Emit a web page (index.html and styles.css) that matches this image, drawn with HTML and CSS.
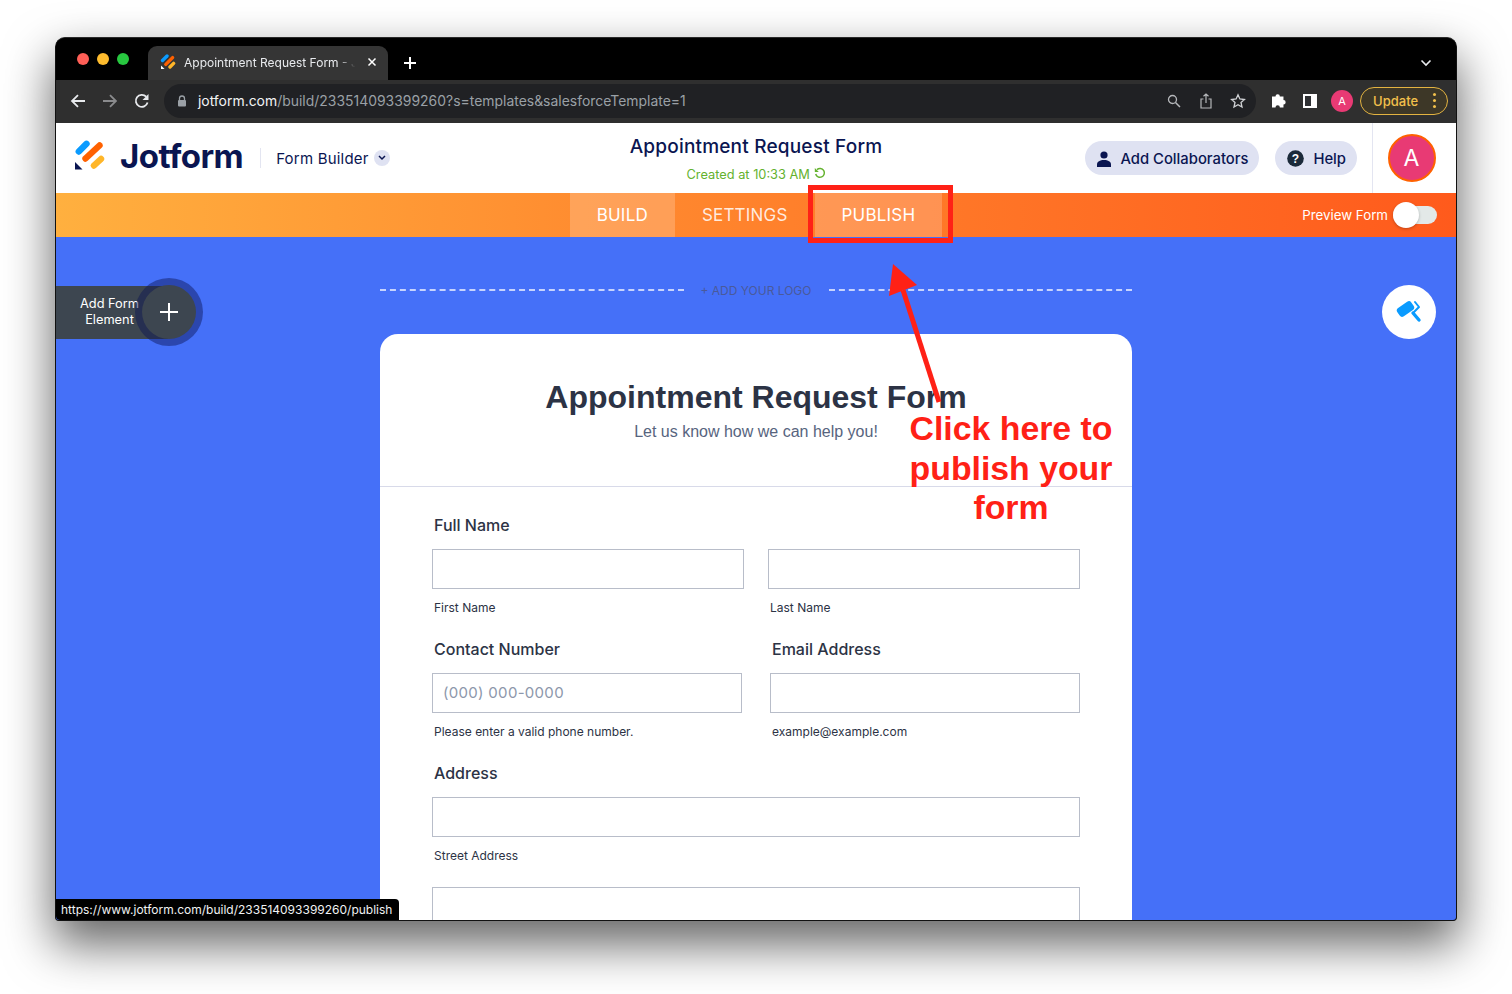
FILE: index.html
```html
<!DOCTYPE html>
<html lang="en">
<head>
  <meta charset="UTF-8">
  <meta name="viewport" content="width=device-width, initial-scale=1.0">
  <title>Appointment Request Form</title>
  <link rel="stylesheet" href="styles.css">
</head>
<body>
  <div class="window">
    <!-- browser tabs -->
    <div class="tabstrip">
      <div class="lights"><i class="red"></i><i class="yellow"></i><i class="green"></i></div>
      <div class="tab">
        <svg class="favicon" width="16" height="16" viewBox="0 0 16 16"><g stroke-linecap="round" stroke-width="3.4"><path d="M2.5 6.500 7 2" stroke="#0a9bff"/><path d="M5.800 10.400 12.600 3.600" stroke="#ff6100"/><path d="M10 13 13.600 9.400" stroke="#ffb629"/></g><path d="M1 11.500V15h3.600z" fill="#fff"/></svg>
        <span class="tab-title">Appointment Request Form - J</span>
        <svg width="10" height="10" viewBox="0 0 10 10"><path d="M1.500 1.500l7 7M8.500 1.500l-7 7" stroke="#fff" stroke-width="1.500"/></svg>
      </div>
      <svg class="newtab" width="14" height="14" viewBox="0 0 14 14"><path d="M7 1v12M1 7h12" stroke="#fff" stroke-width="2"/></svg>
      <svg class="tabmenu" width="12" height="8" viewBox="0 0 12 8"><path d="M1.500 1.500 6 6l4.500-4.500" fill="none" stroke="#e8eaed" stroke-width="1.600"/></svg>
    </div>

    <!-- browser toolbar -->
    <div class="toolbar">
      <svg class="nav-icon" width="16" height="16" viewBox="0 0 16 16"><path d="M15 8H2M8 2 2 8l6 6" fill="none" stroke="#e8eaed" stroke-width="1.800"/></svg>
      <svg class="nav-icon" width="16" height="16" viewBox="0 0 16 16"><path d="M1 8h13M8 2l6 6-6 6" fill="none" stroke="#8a8b8d" stroke-width="1.800"/></svg>
      <svg class="nav-icon" width="16" height="16" viewBox="0 0 16 16"><path d="M13.600 9.500A6 6 0 1 1 12.200 3.700" fill="none" stroke="#e8eaed" stroke-width="1.800"/><path d="M14.500 1v6h-6z" fill="#e8eaed"/></svg>
      <div class="omnibox">
        <svg width="10" height="12" viewBox="0 0 10 12"><path d="M2.500 5V3.500a2.500 2.500 0 0 1 5 0V5" fill="none" stroke="#9aa0a6" stroke-width="1.300"/><rect x="1" y="5" width="8" height="6.500" rx="1" fill="#9aa0a6"/></svg>
        <span class="url"><b>jotform.com</b>/build/233514093399260?s=templates&amp;salesforceTemplate=1</span>
        <div class="omni-icons">
          <svg class="search-icon" width="14" height="14" viewBox="0 0 14 14"><circle cx="5.500" cy="5.500" r="4" fill="none" stroke="#b5b7ba" stroke-width="1.300"/><path d="M8.500 8.500 13 13" stroke="#b5b7ba" stroke-width="1.500"/></svg>
          <svg width="12" height="16" viewBox="0 0 12 16"><path d="M3.500 6H1v9h10V6H8.500M6 10V1M3.500 3.300 6 1l2.500 2.300" fill="none" stroke="#b5b7ba" stroke-width="1.200"/></svg>
          <svg width="16" height="16" viewBox="0 0 16 16"><path d="m8 1.800 1.900 4.200 4.500.5-3.400 3 1 4.500L8 11.700 4 14l1-4.500-3.400-3 4.500-.5z" fill="none" stroke="#d0d2d5" stroke-width="1.300"/></svg>
        </div>
      </div>
      <svg class="ext" width="16" height="16" viewBox="0 0 16 16"><path d="M1 4.500h3.500a2.200 2.200 0 1 1 4.400 0h3.600V8a2.200 2.200 0 1 1 0 4.400V15.500H8.900a2.200 2.200 0 1 0-4.400 0H1z" fill="#fff"/></svg>
      <svg class="panel" width="14" height="14" viewBox="0 0 14 14"><path d="M0 0h14v14H0z" fill="#fff"/><path d="M2 2h6v10H2z" fill="#2f3033"/></svg>
      <div class="chrome-avatar">A</div>
      <div class="update">Update<span class="dots"><i></i><i></i><i></i></span></div>
    </div>

    <!-- jotform header -->
    <header class="topbar">
      <div class="brand">
        <svg class="brand-logo" width="30" height="30" viewBox="0 0 30 30"><g stroke-linecap="round" stroke-width="6.400"><path d="M3.800 11.500 11.500 3.800" stroke="#0a9bff"/><path d="M10.500 18.500 24.500 5.500" stroke="#ff6100"/><path d="M19 25.500 26 19" stroke="#ffb629"/></g><path d="M0 22v7.600h7.500z" fill="#0a1551"/></svg>
        <span class="wordmark">Jotform</span>
        <span class="brand-sep"></span>
        <span class="brand-sub">Form Builder</span>
        <span class="chev"><svg width="8" height="6" viewBox="0 0 8 6"><path d="M1 1l3 3 3-3" fill="none" stroke="#0a1551" stroke-width="1.500"/></svg></span>
      </div>
      <div class="doc">
        <div class="doc-title">Appointment Request Form</div>
        <div class="doc-meta">Created at 10:33 AM
          <svg width="12" height="12" viewBox="0 0 12 12"><path d="M3 2.600A4.400 4.400 0 1 1 1.700 7" fill="none" stroke="#64b22e" stroke-width="1.500"/><path d="M.8 1v4h4z" fill="#64b22e"/></svg>
        </div>
      </div>
      <div class="top-actions">
        <button class="pill">
          <svg width="14" height="16" viewBox="0 0 14 16"><circle cx="7" cy="4" r="3.600" fill="#0a1551"/><path d="M0 16v-2.500C0 10.500 3 9 7 9s7 1.500 7 4.500V16z" fill="#0a1551"/></svg>
          Add Collaborators
        </button>
        <button class="pill">
          <svg width="17" height="17" viewBox="0 0 17 17"><circle cx="8.500" cy="8.500" r="8.300" fill="#1b2a3a"/><text x="8.500" y="12.500" text-anchor="middle" class="help-q">?</text></svg>
          Help
        </button>
        <div class="account"><div class="account-circle">A</div></div>
      </div>
    </header>

    <!-- builder tabs -->
    <nav class="navbar">
      <div class="nav-tabs">
        <a class="nav-tab active">BUILD</a>
        <a class="nav-tab">SETTINGS</a>
        <a class="nav-tab active">PUBLISH</a>
      </div>
      <div class="preview">
        Preview Form
        <span class="toggle"><span class="knob"></span></span>
      </div>
    </nav>

    <main class="canvas">
      <div class="add-element">
        <span class="add-text">Add Form Element</span>
        <span class="add-btn"><svg width="20" height="20" viewBox="0 0 20 20"><path d="M10 1v18M1 10h18" stroke="#fff" stroke-width="2"/></svg></span>
      </div>
      <div class="designer-btn">
        <svg width="26" height="24" viewBox="0 0 26 24"><rect x="1" y="4" width="17" height="10" rx="3" transform="rotate(-35 9.500 9)" fill="#0a9bff"/><path d="M19 2 23 7 17 13" fill="none" stroke="#0a9bff" stroke-width="2" stroke-linecap="round" stroke-linejoin="round"/><path d="M17 13 23 20" fill="none" stroke="#0a9bff" stroke-width="3.400" stroke-linecap="round"/></svg>
      </div>

      <div class="logo-row">
        <span class="dash"></span>
        <span class="logo-text">+ ADD YOUR LOGO</span>
        <span class="dash"></span>
      </div>

      <section class="card">
        <div class="card-head">
          <h1>Appointment Request Form</h1>
          <p>Let us know how we can help you!</p>
        </div>
        <div class="card-body">
          <div class="group">
            <label class="label">Full Name</label>
            <div class="fields wide">
              <div><div class="input"></div><div class="sub">First Name</div></div>
              <div><div class="input"></div><div class="sub">Last Name</div></div>
            </div>
          </div>
          <div class="fields narrow">
            <div class="group">
              <label class="label">Contact Number</label>
              <div class="input placeholder">(000) 000-0000</div>
              <div class="sub">Please enter a valid phone number.</div>
            </div>
            <div class="group">
              <label class="label">Email Address</label>
              <div class="input"></div>
              <div class="sub">example@example.com</div>
            </div>
          </div>
          <div class="group">
            <label class="label">Address</label>
            <div class="input"></div>
            <div class="sub">Street Address</div>
            <div class="input second"></div>
          </div>
        </div>
      </section>
    </main>

    <div class="status">https://www.jotform.com/build/233514093399260/publish</div>
  </div>

  <!-- red annotation drawn over the screenshot -->
  <svg class="callout" width="1512" height="994" viewBox="0 0 1512 994">
    <rect x="810.500" y="187.500" width="140" height="53" fill="none" stroke="#ff2116" stroke-width="5"/>
    <path d="M939 402 903 290" stroke="#ff2116" stroke-width="5" fill="none"/>
    <path d="M893 264 889 296 917 285z" fill="#ff2116"/>
  </svg>
  <div class="callout-text">Click here to<br>publish your<br>form</div>
</body>
</html>
```

FILE: styles.css
```css
* {
  box-sizing: border-box;
}

body {
  margin: 0;
  width: 1512px;
  height: 994px;
  padding: 37px 55px 0;
  background: #fff;
  overflow: hidden;
  position: relative;
  font-family: Inter, "Liberation Sans", sans-serif;
}

.window {
  width: 1402px;
  height: 884px;
  position: relative;
  display: flex;
  flex-direction: column;
  border: 1px solid #111;
  border-top-color: #2a2a2a;
  border-radius: 10px 10px 4px 4px;
  overflow: hidden;
  background: #000;
  box-shadow: 0 22px 48px 2px rgba(0, 0, 0, 0.6);
}

/* browser chrome */
.tabstrip {
  height: 42px;
  flex: none;
  display: flex;
  align-items: flex-end;
  background: #000;
  padding-left: 92px;
  position: relative;
}

.lights {
  position: absolute;
  left: 21px;
  top: 15px;
  display: flex;
  gap: 8px;
}

.lights i {
  width: 12px;
  height: 12px;
  border-radius: 50%;
}

.red { background: #ff5f57; }
.yellow { background: #febc2e; }
.green { background: #28c840; }

.tab {
  width: 240px;
  height: 34px;
  background: #353535;
  border-radius: 9px 9px 0 0;
  display: flex;
  align-items: center;
  padding: 0 11px 2px 12px;
  gap: 8px;
  color: #e8eaed;
  font-size: 12px;
}

.tab-title {
  flex: 1;
  white-space: nowrap;
  overflow: hidden;
  -webkit-mask-image: linear-gradient(to right, #000 88%, transparent 98%);
  mask-image: linear-gradient(to right, #000 88%, transparent 98%);
}

.newtab {
  margin: 0 0 10px 15px;
}

.tabmenu {
  position: absolute;
  right: 24px;
  top: 21px;
}

.toolbar {
  height: 43px;
  flex: none;
  background: #2f2f2f;
  display: flex;
  align-items: center;
  padding: 0 8px 2px 14px;
}

.nav-icon {
  margin-right: 16px;
}

.omnibox {
  width: 1094px;
  height: 34px;
  margin-left: -2px;
  border-radius: 17px;
  background: #202124;
  display: flex;
  align-items: center;
  padding: 0 10px 0 13px;
  color: #9aa0a6;
  font-size: 13.950px;
}

.url {
  margin-left: 11px;
  flex: 1;
}

.url b {
  color: #f1f3f4;
  font-weight: 400;
}

.omni-icons {
  display: flex;
  align-items: center;
  gap: 18px;
}

.search-icon {
  margin-right: 1px;
}

.ext {
  margin: -2px 0 0 15px;
}

.panel {
  margin-left: 16px;
}

.chrome-avatar {
  width: 22px;
  height: 22px;
  margin-left: 14px;
  border-radius: 50%;
  background: #e83a74;
  color: #fff;
  font-size: 11px;
  display: flex;
  align-items: center;
  justify-content: center;
}

.update {
  width: 88px;
  height: 28px;
  margin-left: 7px;
  border: 1px solid #e3b341;
  border-radius: 14px;
  background: #3d3727;
  color: #f2c04c;
  font-size: 13px;
  font-weight: 500;
  display: flex;
  align-items: center;
  justify-content: space-between;
  padding: 0 11px 0 12px;
}

.dots {
  display: flex;
  flex-direction: column;
  gap: 3px;
}

.dots i {
  width: 3px;
  height: 3px;
  border-radius: 50%;
  background: #f2c04c;
}

/* jotform header */
.topbar {
  height: 70px;
  flex: none;
  background: #fff;
  display: flex;
  align-items: center;
  position: relative;
  color: #0a1551;
}

.brand {
  display: flex;
  align-items: center;
  padding-left: 19px;
}

.brand-logo {
  margin-top: -6px;
}

.wordmark {
  margin: -5px 0 0 15px;
  font-size: 33px;
  font-weight: 700;
  letter-spacing: -0.550px;
}

.brand-sep {
  width: 1px;
  height: 20px;
  margin: 0 15px 0 17px;
  background: #e3e5f1;
}

.brand-sub {
  font-size: 15px;
  letter-spacing: 0.2px;
  color: #0a1551;
}

.chev {
  width: 16px;
  height: 16px;
  margin-left: 5px;
  border-radius: 50%;
  background: #dfe2f2;
  display: flex;
  align-items: center;
  justify-content: center;
}

.doc {
  position: absolute;
  left: 0;
  right: 0;
  top: 12px;
  text-align: center;
  pointer-events: none;
}

.doc-title {
  font-size: 19px;
  font-weight: 500;
  line-height: 24px;
  letter-spacing: 0.2px;
}

.doc-meta {
  margin-top: 7px;
  font-size: 12.800px;
  line-height: 18px;
  color: #64b22e;
}

.top-actions {
  margin-left: auto;
  height: 100%;
  display: flex;
  align-items: center;
  gap: 16px;
}

.pill {
  height: 34px;
  border: 0;
  border-radius: 17px;
  background: #dfe2f2;
  color: #0a1551;
  font-family: inherit;
  font-size: 14.800px;
  font-weight: 500;
  display: flex;
  align-items: center;
  gap: 9px;
  padding: 1px 11px 0 12px;
}

.help-q {
  font: 700 12px "Liberation Sans", sans-serif;
  fill: #fff;
}

.account {
  width: 84px;
  height: 100%;
  margin-left: -1px;
  padding-right: 6px;
  border-left: 1px solid #e3e5f1;
  display: flex;
  align-items: center;
  justify-content: center;
}

.account-circle {
  width: 48px;
  height: 48px;
  border: 2px solid #ff6100;
  border-radius: 50%;
  background: #e83a74;
  color: #fff;
  font-size: 23px;
  display: flex;
  align-items: center;
  justify-content: center;
}

/* orange nav */
.navbar {
  height: 44px;
  flex: none;
  position: relative;
  display: flex;
  justify-content: center;
  background: linear-gradient(90deg, #ffb03f 0%, #ff8a2f 40%, #ff5a1c 100%);
}

.nav-tabs {
  display: flex;
  height: 100%;
}

.nav-tab {
  padding: 0 27px;
  display: flex;
  align-items: center;
  color: rgba(255, 255, 255, 0.85);
  font-size: 17px;
  letter-spacing: 0.2px;
}

.nav-tab.active {
  background: rgba(255, 255, 255, 0.2);
  color: #fff;
}

.preview {
  position: absolute;
  right: 19px;
  top: 0;
  height: 100%;
  display: flex;
  align-items: center;
  gap: 5px;
  color: #fff;
  font-size: 13.300px;
}

.toggle {
  width: 44px;
  height: 18px;
  border-radius: 9px;
  background: #e3e9e8;
  position: relative;
}

.knob {
  position: absolute;
  left: 0;
  top: -4px;
  width: 26px;
  height: 26px;
  border-radius: 50%;
  background: #fff;
  box-shadow: 0 1px 3px rgba(0, 0, 0, 0.25);
}

/* form canvas */
.canvas {
  flex: 1;
  min-height: 0;
  background: #4570f8;
  position: relative;
  overflow: hidden;
  padding: 43px 324px 0;
}

.add-element {
  position: absolute;
  left: 0;
  top: 49px;
  width: 112px;
  height: 53px;
  background: #3d4650;
  color: #fff;
  display: flex;
  align-items: center;
}

.add-text {
  width: 83px;
  margin: -2px 0 0 12px;
  text-align: center;
  font-size: 12.800px;
  line-height: 16px;
}

.add-btn {
  position: absolute;
  left: 86px;
  top: -1px;
  width: 54px;
  height: 54px;
  border-radius: 50%;
  background: #3d4650;
  box-shadow: 0 0 0 7px rgba(10, 21, 81, 0.45);
  display: flex;
  align-items: center;
  justify-content: center;
}

.designer-btn {
  position: absolute;
  right: 20px;
  top: 48px;
  width: 54px;
  height: 54px;
  border-radius: 50%;
  background: #fff;
  display: flex;
  align-items: center;
  justify-content: center;
}

.logo-row {
  height: 20px;
  display: flex;
  align-items: center;
}

.dash {
  flex: 1;
  border-top: 2px dashed rgba(255, 255, 255, 0.7);
}

.logo-text {
  margin: 0 17px;
  font-size: 12px;
  white-space: nowrap;
  color: #4a5a9a;
}

.card {
  margin-top: 34px;
  width: 752px;
  height: 700px;
  background: #fff;
  border-radius: 18px 18px 0 0;
}

.card-head {
  height: 153px;
  padding-top: 44px;
  border-bottom: 1px solid #d8dae9;
  text-align: center;
  font-family: "Liberation Sans", sans-serif;
}

.card-head h1 {
  margin: 0;
  font-size: 32px;
  line-height: 38px;
  color: #2c3345;
}

.card-head p {
  margin: 6px 0 0;
  font-size: 16px;
  line-height: 20px;
  color: #57647e;
}

.card-body {
  padding: 28px 52px 0;
}

.group {
  height: 124px;
}

.label {
  display: block;
  height: 34px;
  padding-left: 2px;
  font-size: 16px;
  line-height: 20px;
  font-weight: 500;
  color: #2c3345;
}

.fields {
  display: grid;
}

.fields.wide {
  grid-template-columns: 312px 312px;
  column-gap: 24px;
}

.fields.narrow {
  grid-template-columns: 310px 310px;
  column-gap: 28px;
}

.input {
  height: 40px;
  border: 1px solid #b8bdc9;
  background: #fff;
}

.input.placeholder {
  padding-left: 10px;
  font-size: 15px;
  line-height: 38px;
  letter-spacing: 0.3px;
  color: #8d97ab;
}

.input.second {
  margin-top: 24px;
}

.sub {
  margin-top: 11px;
  padding-left: 2px;
  font-size: 12px;
  line-height: 15px;
  color: #2c3345;
}

.status {
  position: absolute;
  left: 0;
  bottom: 0;
  height: 21px;
  padding: 0 7px 0 5px;
  border-radius: 0 4px 0 4px;
  background: #000;
  color: #f1f3f4;
  font-size: 12px;
  line-height: 22px;
}

/* annotation */
.callout {
  position: absolute;
  left: 0;
  top: 0;
  pointer-events: none;
}

.callout-text {
  position: absolute;
  left: 861px;
  top: 409px;
  width: 300px;
  text-align: center;
  color: #ff2116;
  font: 700 33.800px/39.500px "Liberation Sans", sans-serif;
}
```
